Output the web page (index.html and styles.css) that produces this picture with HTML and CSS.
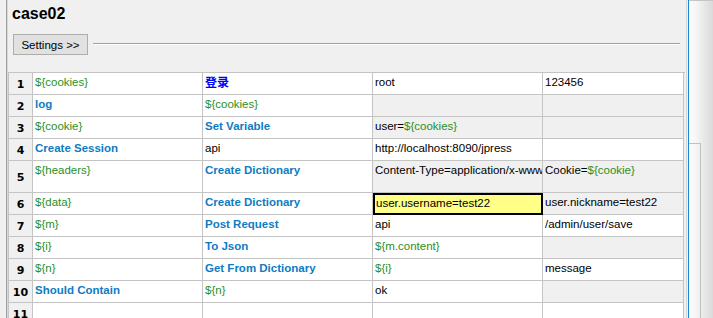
FILE: index.html
```html
<!DOCTYPE html>
<html>
<head>
  <meta charset="UTF-8">
  <title>case02</title>
  <link rel="stylesheet" href="styles.css">
</head>
<body>

  <div class="window">
    <div class="editor">
      <div class="pane">
        <h1 class="case-title">case02</h1>
        <div class="settings-row">
          <button class="settings-btn">Settings &gt;&gt;</button>
          <span class="rule"></span>
        </div>

        <div class="grid">
          <div class="num">1</div>
          <div class="cell var">${cookies}</div>
          <div class="cell user-kw">登录</div>
          <div class="cell">root</div>
          <div class="cell">123456</div>

          <div class="num">2</div>
          <div class="cell kw">log</div>
          <div class="cell var">${cookies}</div>
          <div class="cell off"></div>
          <div class="cell off"></div>

          <div class="num">3</div>
          <div class="cell var">${cookie}</div>
          <div class="cell kw">Set Variable</div>
          <div class="cell off">user=<span class="var">${cookies}</span></div>
          <div class="cell off"></div>

          <div class="num">4</div>
          <div class="cell kw">Create Session</div>
          <div class="cell">api</div>
          <div class="cell">http://localhost:8090/jpress</div>
          <div class="cell"></div>

          <div class="num">5</div>
          <div class="cell var">${headers}</div>
          <div class="cell kw">Create Dictionary</div>
          <div class="cell off">Content-Type=application/x-www-</div>
          <div class="cell off">Cookie=<span class="var">${cookie}</span></div>

          <div class="num">6</div>
          <div class="cell var">${data}</div>
          <div class="cell kw">Create Dictionary</div>
          <div class="cell selected">user.username=test22</div>
          <div class="cell off">user.nickname=test22</div>

          <div class="num">7</div>
          <div class="cell var">${m}</div>
          <div class="cell kw">Post Request</div>
          <div class="cell">api</div>
          <div class="cell">/admin/user/save</div>

          <div class="num">8</div>
          <div class="cell var">${i}</div>
          <div class="cell kw">To Json</div>
          <div class="cell var">${m.content}</div>
          <div class="cell off"></div>

          <div class="num">9</div>
          <div class="cell var">${n}</div>
          <div class="cell kw">Get From Dictionary</div>
          <div class="cell var">${i}</div>
          <div class="cell">message</div>

          <div class="num">10</div>
          <div class="cell kw">Should Contain</div>
          <div class="cell var">${n}</div>
          <div class="cell">ok</div>
          <div class="cell off"></div>

          <div class="num">11</div>
          <div class="cell"></div>
          <div class="cell"></div>
          <div class="cell"></div>
          <div class="cell"></div>
        </div>
      </div>
    </div>

    <div class="side">
      <div class="side-top"></div>
      <div class="side-body">
        <div class="side-box"></div>
      </div>
    </div>
  </div>

</body>
</html>
```

FILE: styles.css
```css
body {
  margin: 0;
  background-color: #f0f0f0;
  font-family: "Liberation Sans", Arial, sans-serif;
  font-size: 11.5px;
  color: #000000;
  overflow: hidden;
}
.window {
  display: flex;
  height: 318px;
  overflow: hidden;
}
/* Left editor part */
.editor {
  width: 686px;
  padding-left: 6px;
  box-sizing: border-box;
  flex: none;
}
.pane {
  height: 100%;
  border-left: 1px solid #a0a0a0;
  box-shadow: inset 1px 0 0 #d8d8d8;
  padding-left: 1px;
  display: flex;
  flex-direction: column;
}
.case-title {
  margin: 0;
  padding: 4px 0 0 4px;
  font-size: 16px;
  line-height: 20px;
  font-weight: bold;
}
.settings-row {
  display: flex;
  align-items: flex-start;
  margin-top: 10px;
  padding-left: 5px;
}
.settings-btn {
  width: 75px;
  height: 21px;
  padding: 0;
  background-color: #e1e1e1;
  border: 1px solid #adadad;
  font-family: "Liberation Sans", Arial, sans-serif;
  font-size: 11.5px;
  color: #000000;
}
.rule {
  flex: 1;
  margin: 9px 6px 0 5px;
  border-top: 1px solid #a0a0a0;
  border-bottom: 1px solid #ffffff;
}
/* Test case grid */
.grid {
  display: grid;
  grid-template-columns: 24px 170px 170px 170px 141px;
  grid-template-rows: repeat(4, 22px) 32px repeat(6, 22px);
  margin-top: 17px;
  width: 676px;
  flex: none;
  border-top: 1px solid #c4c4c4;
  border-left: 1px solid #c4c4c4;
}
.num, .cell {
  box-sizing: border-box;
  border-right: 1px solid #c4c4c4;
  border-bottom: 1px solid #c4c4c4;
  overflow: hidden;
  white-space: nowrap;
}
.num {
  background-color: #f0f0f0;
  font-family: "DejaVu Sans", sans-serif;
  font-weight: bold;
  font-size: 11px;
  display: flex;
  align-items: center;
  justify-content: center;
  padding-top: 2px;
}
.cell {
  background-color: #ffffff;
  padding: 2px 0 0 2px;
  line-height: 14px;
}
.off {
  background-color: #f0f0f0;
}
.var {
  color: #2b8f25;
}
.kw {
  color: #0d7cc4;
  font-weight: bold;
}
.user-kw {
  color: #0000ff;
  font-weight: bold;
  font-family: "Noto Sans CJK SC", sans-serif;
  font-size: 12px;
}
.selected {
  background-color: #ffff88;
  border: 2px solid #000000;
  padding: 1px 0 0 1px;
}
/* Right docked panel */
.side {
  flex: 1;
  border-left: 1px solid #d6d6d6;
  box-shadow: inset 1px 0 0 #f0f0f0, inset 2px 0 0 #1a86d8;
  padding-left: 2px;
  display: flex;
  flex-direction: column;
}
.side-top {
  height: 24px;
  background: linear-gradient(to right, #ececec, #dcdcdc);
  border-bottom: 1px solid #c6c6c6;
}
.side-body {
  flex: 1;
  background: linear-gradient(to right, #fdfdfd, #f2f2f2 40%, #d9d9d9);
  padding-top: 142px;
}
.side-box {
  width: 11px;
  height: 200px;
  border-top: 1px solid #c0c0c0;
  border-right: 1px solid #c0c0c0;
}
```
